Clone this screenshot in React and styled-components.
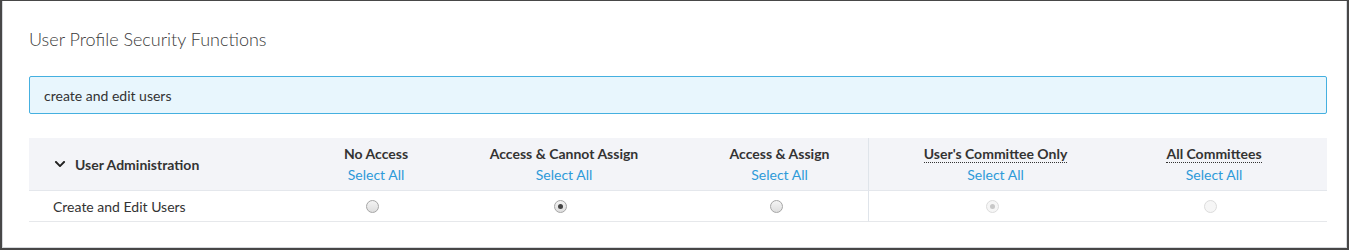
import styled, { createGlobalStyle } from "styled-components";
import { FaChevronDown } from "react-icons/fa";

const GlobalStyle = createGlobalStyle`
    body {
        margin: 0;
        background: #fff;
        font-family: Lato, "Open Sans", sans-serif;
        color: #333;
    }
`;

const Frame = styled.div`
    box-sizing: border-box;
    width: 1349px;
    height: 250px;
    border: 2px solid #474747;
    border-top-width: 1px;
    background: #fff;
`;

const Panel = styled.div`
    box-sizing: border-box;
    height: 100%;
    border: 1px solid #d6d9dd;
    border-top: none;
    padding: 0 19px 0 26px;
`;

const Title = styled.h2`
    margin: 0;
    padding-top: 27px;
    font-size: 18px;
    line-height: 22px;
    font-weight: 300;
    color: #3a3a3a;
`;

const SearchBox = styled.div`
    box-sizing: border-box;
    margin-top: 26px;
    height: 38px;
    display: flex;
    align-items: center;
    padding: 0 14px;
    background: #e8f6fd;
    border: 1px solid #45b0e0;
    border-radius: 2px;
    font-size: 14px;
`;

const Table = styled.div`
    margin-top: 24px;
    display: grid;
    grid-template-columns: 286px 122px 254px 177px 254px 205px;
`;

const HeadCell = styled.div`
    height: 52px;
    background: #f3f4f8;
    border-bottom: 1px solid #e4e7ec;
    display: flex;
    flex-direction: column;
    align-items: center;
    justify-content: center;
    gap: 4px;
    font-size: 14px;
    font-weight: 700;
    border-left: ${(p) => (p.$divider ? "1px solid #dfe4ea" : "none")};
    padding-right: ${(p) => p.$padRight || 0}px;
`;

const GroupCell = styled(HeadCell)`
    flex-direction: row;
    justify-content: flex-start;
    padding-left: 25px;
    gap: 9px;
`;

const HeadLabel = styled.span`
    line-height: 16px;
    border-bottom: ${(p) => (p.$dotted ? "1px dotted #333" : "1px solid transparent")};
`;

const SelectAll = styled.a`
    font-weight: 400;
    color: #2e9ad8;
    line-height: 16px;
    cursor: pointer;
`;

const Cell = styled.div`
    height: 30px;
    border-bottom: 1px solid #e6e8eb;
    display: flex;
    align-items: center;
    justify-content: ${(p) => (p.$left ? "flex-start" : "center")};
    padding-left: ${(p) => (p.$left ? "24px" : "0")};
    padding-right: ${(p) => (p.$left ? 0 : (p.$padRight || 0) + 7)}px;
    font-size: 14px;
    border-left: ${(p) => (p.$divider ? "1px solid #dfe4ea" : "none")};
`;

const Radio = styled.span`
    box-sizing: border-box;
    width: 13px;
    height: 13px;
    border-radius: 50%;
    border: 1px solid ${(p) => (p.$disabled ? "#dcdcdc" : "#a6a6a6")};
    background: ${(p) => (p.$disabled ? "#f6f6f6" : "linear-gradient(#f4f4f4, #dedede)")};
    display: flex;
    align-items: center;
    justify-content: center;
    &::after {
        content: "";
        display: ${(p) => (p.$checked ? "block" : "none")};
        width: 5px;
        height: 5px;
        border-radius: 50%;
        background: ${(p) => (p.$disabled ? "#c8c8c8" : "#444")};
    }
`;

const columns = [
    { label: "No Access", checked: false },
    { label: "Access & Cannot Assign", checked: true },
    { label: "Access & Assign", checked: false },
    { label: "User's Committee Only", checked: true, dotted: true, disabled: true, divider: true },
    { label: "All Committees", checked: false, dotted: true, disabled: true, padRight: 21 },
];

export default function App() {
    return (
        <Frame>
            <GlobalStyle />
            <Panel>
                <Title>User Profile Security Functions</Title>
                <SearchBox>create and edit users</SearchBox>
                <Table>
                    <GroupCell>
                        <FaChevronDown size={12} color="#222" />
                        <span>User Administration</span>
                    </GroupCell>
                    {columns.map((c) => (
                        <HeadCell key={c.label} $divider={c.divider} $padRight={c.padRight}>
                            <HeadLabel $dotted={c.dotted}>{c.label}</HeadLabel>
                            <SelectAll>Select All</SelectAll>
                        </HeadCell>
                    ))}
                    <Cell $left>Create and Edit Users</Cell>
                    {columns.map((c) => (
                        <Cell key={c.label} $divider={c.divider} $padRight={c.padRight}>
                            <Radio $checked={c.checked} $disabled={c.disabled} />
                        </Cell>
                    ))}
                </Table>
            </Panel>
        </Frame>
    );
}
